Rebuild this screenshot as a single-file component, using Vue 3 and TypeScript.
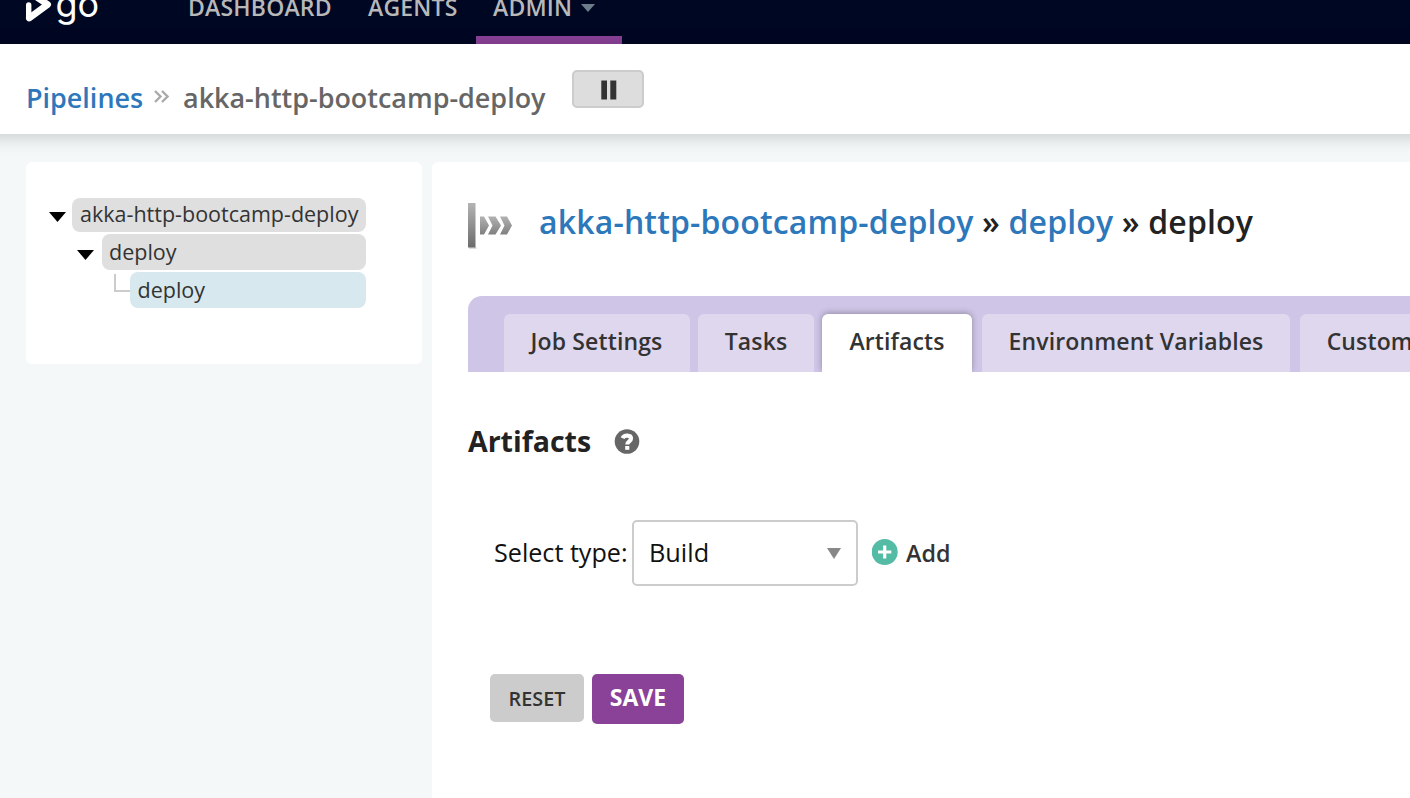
<script setup lang="ts">
import { ref } from 'vue'

interface Tab { label: string; cls: string }

const tabs: Tab[] = [
  { label: 'Job Settings', cls: 'job' },
  { label: 'Tasks', cls: 'tasks' },
  { label: 'Artifacts', cls: 'artifacts' },
  { label: 'Environment Variables', cls: 'env' },
  { label: 'Custom Tabs', cls: 'custom' },
]
const active = ref('Artifacts')
</script>

<template>
  <div class="page">
    <header class="topbar">
      <svg class="logo" width="76" height="44" viewBox="0 0 76 44" role="img">
        <path d="M4 -8L22.700 4.500L4.300 18" fill="none" stroke="#fff" stroke-width="6.600" stroke-linejoin="round" stroke-linecap="round" />
        <path d="M3.700 5v13" stroke="#fff" stroke-width="5.400" stroke-linecap="round" />
        <text x="30.500" y="17" class="logo-text" textLength="43.500">go</text>
      </svg>
      <nav class="nav">
        <a class="nav-item dash">DASHBOARD</a>
        <a class="nav-item agents">AGENTS</a>
        <a class="nav-item admin">ADMIN<svg class="caret" width="14" height="8" viewBox="0 0 14 8"><path d="M0 0H14L7 8Z" fill="#6c7d8a" /></svg></a>
      </nav>
    </header>

    <div class="crumbs">
      <a class="crumb-link">Pipelines</a>
      <svg class="crumb-sep" width="15" height="13" viewBox="0 0 15 13"><path d="M1 1L6.500 6.500L1 12M8 1L13.500 6.500L8 12" fill="none" stroke="#aaa" stroke-width="2.400" /></svg>
      <span class="crumb-current">akka-http-bootcamp-deploy</span>
      <button class="pause"><svg width="16" height="20" viewBox="0 0 16 20"><path d="M0.300 .5H6V19.500H.3ZM9.300 .5H15.300V19.500H9.300Z" fill="#333" /></svg></button>
    </div>

    <main class="body">
      <aside class="tree">
        <div class="row root"><svg class="tri" width="17" height="10" viewBox="0 0 17 10"><path d="M0 0H17L8.500 10Z" /></svg><span class="node">akka-http-bootcamp-deploy</span></div>
        <div class="row stage"><svg class="tri" width="17" height="10" viewBox="0 0 17 10"><path d="M0 0H17L8.500 10Z" /></svg><span class="node">deploy</span></div>
        <div class="row job-row"><i class="elbow"></i><span class="node">deploy</span></div>
      </aside>

      <section class="panel">
        <h2 class="title">
          <svg class="stage-icon" width="46" height="48" viewBox="0 0 46 48">
            <defs>
              <linearGradient id="bar" x1="0" y1="0" x2="0" y2="1"><stop offset="0" stop-color="#b4b4b4" /><stop offset="1" stop-color="#6c6c6c" /></linearGradient>
              <linearGradient id="arr" x1="0" y1="0" x2="0" y2="1"><stop offset="0" stop-color="#b2b2b2" /><stop offset="1" stop-color="#808080" /></linearGradient>
            </defs>
            <path d="M1 44H8.500V46H1Z" fill="#ddd" />
            <path d="M0 0H7.500V44.500H0Z" fill="url(#bar)" />
            <path d="M12 13.500L16 13.500L21 22.500L16 31.500L12 31.500ZM20 13.500H27.500L33 22.500L27.500 31.500H20L24.500 22.500ZM32 13.500H39L44 22.500L39 31.500H32L36.500 22.500Z" fill="url(#arr)" />
          </svg>
          <span class="title-text"><a>akka-http-bootcamp-deploy</a> » <a>deploy</a> » deploy</span>
        </h2>

        <div class="tabs">
          <a v-for="t in tabs" :key="t.label" class="tab" :class="[t.cls, { active: t.label === active }]" @click="active = t.label"><span>{{ t.label }}</span></a>
        </div>

        <h3 class="heading"><span>Artifacts</span><svg class="help" width="26" height="26" viewBox="0 0 26 26"><circle cx="13" cy="12.500" r="12.300" fill="#666" /><path d="M8.500 9.200C10.300 5.500 17 5.700 17 9.500C17 12.400 13.300 12.200 13.300 15.500" fill="none" stroke="#fff" stroke-width="4.200" /><path d="M11.200 17H15.300V20.800H11.200Z" fill="#fff" /></svg></h3>

        <div class="form-row">
          <label class="label">Select type:</label>
          <div class="select"><span>Build</span><svg width="14" height="11" viewBox="0 0 14 11"><path d="M0 0H14L7 11Z" fill="#888" /></svg></div>
          <a class="add"><svg width="26" height="26" viewBox="0 0 26 26"><circle cx="12.700" cy="13" r="13" fill="#54bba4" /><path d="M6 13H19.300M12.700 6.500V19.500" stroke="#fff" stroke-width="3.200" /></svg><span>Add</span></a>
        </div>

        <div class="actions">
          <button class="reset">RESET</button>
          <button class="save">SAVE</button>
        </div>
      </section>
    </main>
  </div>
</template>

<style>
body { background: #f4f8f9; overflow: hidden; }
</style>

<style scoped>
.page { width: 1410px; height: 798px; overflow: hidden; display: flex; flex-direction: column; background: #f4f8f9; font-family: "Open Sans", "Noto Sans", sans-serif; color: #333; }
.page * { box-sizing: border-box; }
.page svg { display: block; flex: none; }
.topbar { height: 44px; flex: none; background: #000723; display: flex; padding-left: 25px; overflow: hidden; }
.logo-text { font-family: Inter, sans-serif; font-size: 36px; fill: #fff; }
.nav { display: flex; margin-left: 69px; }
.nav-item { height: 44px; line-height: 14px; padding: 0 18px; font-size: 23px; font-weight: 600; letter-spacing: .2px; color: #b8b8b8; white-space: nowrap; }
.dash { width: 180px; }
.agents { width: 126px; }
.admin { width: 146px; padding: 0 17px; display: flex; border-bottom: 8px solid #8a4198; }
.caret { margin: 4px 0 0 9px; }
.crumbs { width: 1490px; margin-left: -40px; height: 90px; flex: none; background: #fff; display: flex; align-items: flex-start; padding-left: 66px; box-shadow: 0 2px 18px rgba(0, 0, 0, .2); font-size: 26.950px; font-weight: 600; line-height: 40px; white-space: nowrap; }
.crumb-link { color: #2d77bb; width: 128px; margin-top: 34px; }
.crumb-sep { margin-top: 46px; }
.crumb-current { color: #666; width: 389px; margin: 34px 0 0 14px; }
.pause { width: 72px; height: 38px; margin-top: 26px; background: #ddd; border: 2px solid #ccc; border-radius: 5px; padding: 1px 0 0 2px; display: flex; align-items: center; justify-content: center; }
.body { flex: 1; display: flex; align-items: flex-start; padding: 28px 0 0 26px; gap: 10px; }
.tree { width: 396px; height: 202px; flex: none; background: #fff; border-radius: 6px; padding: 36px 56px 0 23px; display: flex; flex-direction: column; gap: 2px; }
.row { display: flex; height: 36px; }
.root { height: 34px; }
.tri { margin-top: 14px; }
.stage .tri { margin-top: 16px; }
.node { flex: 1; background: #dfdfdf; border-radius: 8px; padding: 0 8px; font-size: 21.500px; line-height: 36px; white-space: nowrap; }
.root .node { margin-left: 6px; line-height: 32px; }
.stage { padding-left: 28px; }
.stage .node { margin-left: 8px; padding-left: 7px; }
.job-row { padding-left: 65px; }
.job-row .node { background: #d7e9ef; padding-left: 7.500px; }
.elbow { width: 16px; height: 18px; margin-top: 2px; border: solid #ccc; border-width: 0 0 2px 2px; }
.panel { flex: 1; height: 636px; background: #fff; border-radius: 6px 0 0 0; padding: 41px 0 0 36px; min-width: 0; overflow: hidden; }
.title { margin: 0; height: 93px; display: flex; font-size: 32px; letter-spacing: .16px; line-height: 38px; font-weight: 600; color: #222; white-space: nowrap; }
.title a { color: #2d77bb; }
.title-text { margin-left: 25px; }
.tabs { height: 76px; background: #cfc5e7; border-radius: 14px 0 0 0; padding: 18px 0 0 36px; display: flex; width: 1000px; }
.tab { height: 58px; flex: none; background: #dfd7ee; border-radius: 6px 6px 0 0; font-size: 23px; font-weight: 600; letter-spacing: .13px; line-height: 55px; text-align: center; margin-right: 8px; white-space: nowrap; }
.job { width: 186px; padding-right: 1px; }
.tasks { width: 116px; }
.artifacts { width: 150px; margin-right: 10px; }
.env { width: 308px; margin-right: 10px; }
.custom { width: 198px; }
.tab.active { background: #fff; box-shadow: 0 -1px 6px rgba(0, 0, 0, .3); clip-path: inset(-10px -10px 0 -10px); }
.heading { margin: 50px 0 0; height: 40px; display: flex; font-size: 28.500px; line-height: 38px; font-weight: 700; color: #222; }
.heading span { width: 146px; }
.help { margin-top: 7px; }
.form-row { margin-top: 58px; height: 66px; display: flex; align-items: center; padding-left: 26px; white-space: nowrap; }
.label { width: 138px; font-size: 25.150px; color: #111; padding-bottom: 2px; }
.select { width: 226px; height: 66px; border: 2px solid #ccc; border-radius: 5px; display: flex; align-items: center; justify-content: space-between; padding: 0 15px; font-size: 25.300px; color: #111; }
.select span { padding-bottom: 2px; }
.add { display: flex; align-items: center; margin-left: 14px; font-size: 23.300px; font-weight: 600; padding-bottom: 2px; }
.add span { margin-left: 8px; padding-top: 1px; }
.actions { margin: 88px 0 0 22px; display: flex; align-items: flex-start; gap: 8px; }
.actions button { border: 0; border-radius: 5px; padding: 0; font-family: inherit; }
.actions .reset { width: 94px; height: 48px; background: #ccc; color: #333; font-size: 19.800px; font-weight: 600; padding-top: 1px; }
.save { width: 92px; height: 50px; background: #8a4198; color: #fff; font-size: 23px; font-weight: 700; }
.actions .save { padding-bottom: 4px; }
</style>
